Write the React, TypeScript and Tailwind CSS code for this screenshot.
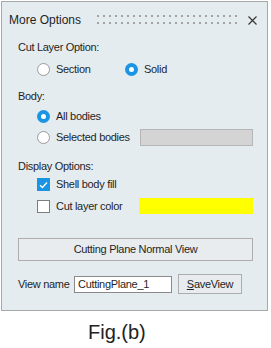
import React from "react";

// Dialog "More Options" with cut layer settings
const font = { fontFamily: '"Liberation Sans", Arial, sans-serif' };

const Radio = ({ on }: { on?: boolean }) =>
  on ? (
    <span className="w-[13px] h-[13px] rounded-full bg-[#1a94e3] flex items-center justify-center shrink-0">
      <span className="w-[5px] h-[5px] rounded-full bg-white" />
    </span>
  ) : (
    <span className="w-[13px] h-[13px] rounded-full bg-white border border-[#9a9a9a] shrink-0" />
  );

const Check = ({ on }: { on?: boolean }) =>
  on ? (
    <span className="w-[13px] h-[13px] bg-[#1a94e3] flex items-center justify-center shrink-0">
      <svg width="9" height="8" viewBox="0 0 9 8">
        <path d="M1 4.2 L3.4 6.4 L8 1.5" fill="none" stroke="white" strokeWidth="1.4" />
      </svg>
    </span>
  ) : (
    <span className="w-[13px] h-[13px] bg-white border border-[#7d7d7d] shrink-0" />
  );

export default function App() {
  const dots = Array.from({ length: 48 });
  return (
    <div className="w-[271px] h-[348px] bg-white pt-[1px] pl-[1px] text-[#1f1f1f]" style={font}>
      <div className="w-[267px] h-[310px] border border-[#a8a8a8] bg-[#e5ecf0] pl-[16px] pr-[14px] flex flex-col text-[11px] tracking-[-0.3px]">
        {/* title bar */}
        <div className="mt-[8px] h-[20px] flex items-center -ml-[9px] -mr-[14px] whitespace-nowrap">
          <span className="text-[12px] tracking-normal shrink-0">More Options</span>
          <div className="ml-[16px] shrink-0 grid grid-cols-[repeat(24,2px)] gap-x-[4px] gap-y-[5px] mt-[-1px]">
            {dots.map((_, i) => (
              <span key={i} className="w-[2px] h-[2px] bg-[#a3a3a3]" />
            ))}
          </div>
          <svg className="ml-[11px] shrink-0" width="9" height="9" viewBox="0 0 9 9">
            <path d="M0.5 0.5 L8.5 8.5 M8.5 0.5 L0.5 8.5" stroke="#333" strokeWidth="1.1" />
          </svg>
        </div>

        <div className="mt-[10px] h-[15px] flex items-center">Cut Layer Option:</div>
        <div className="mt-[6px] h-[16px] flex items-center pl-[19px]">
          <div className="w-[88px] flex items-center gap-[6px]">
            <Radio />
            <span>Section</span>
          </div>
          <div className="flex items-center gap-[6px]">
            <Radio on />
            <span>Solid</span>
          </div>
        </div>

        <div className="mt-[12px] h-[14px] flex items-center">Body:</div>
        <div className="mt-[5px] h-[17px] flex items-center pl-[19px] gap-[6px]">
          <Radio on />
          <span>All bodies</span>
        </div>
        <div className="mt-[4px] h-[17px] flex items-center pl-[19px] gap-[6px]">
          <Radio />
          <span>Selected bodies</span>
          <div className="ml-auto w-[113px] h-[17px] bg-[#d4d4d4] border border-[#b6b6b6]" />
        </div>

        <div className="mt-[13px] h-[14px] flex items-center">Display Options:</div>
        <div className="mt-[5px] h-[13px] flex items-center pl-[19px] gap-[6px]">
          <Check on />
          <span>Shell body fill</span>
        </div>
        <div className="mt-[7px] h-[16px] flex items-center pl-[19px] gap-[6px]">
          <Check />
          <span>Cut layer color</span>
          <div className="ml-auto w-[114px] h-[16px] bg-[#ffff00]" />
        </div>

        <button className="mt-[24px] h-[23px] w-full bg-[#e8ecef] border border-[#adadad] flex items-center justify-center">
          Cutting Plane Normal View
        </button>

        <div className="mt-[13px] h-[20px] flex items-center">
          <span className="w-[56px]">View name</span>
          <div className="w-[98px] h-[17px] bg-white border border-[#8a8a8a] flex items-center pl-[3px]">
            CuttingPlane_1
          </div>
          <button className="ml-[6px] w-[64px] h-[20px] bg-[#e8ecef] border border-[#adadad] flex items-center justify-center">
            <span className="underline">S</span>aveView
          </button>
        </div>
      </div>
      <div className="mt-[11px] ml-[87px] text-[20px] leading-[20px] text-[#222]">Fig.(b)</div>
    </div>
  );
}
